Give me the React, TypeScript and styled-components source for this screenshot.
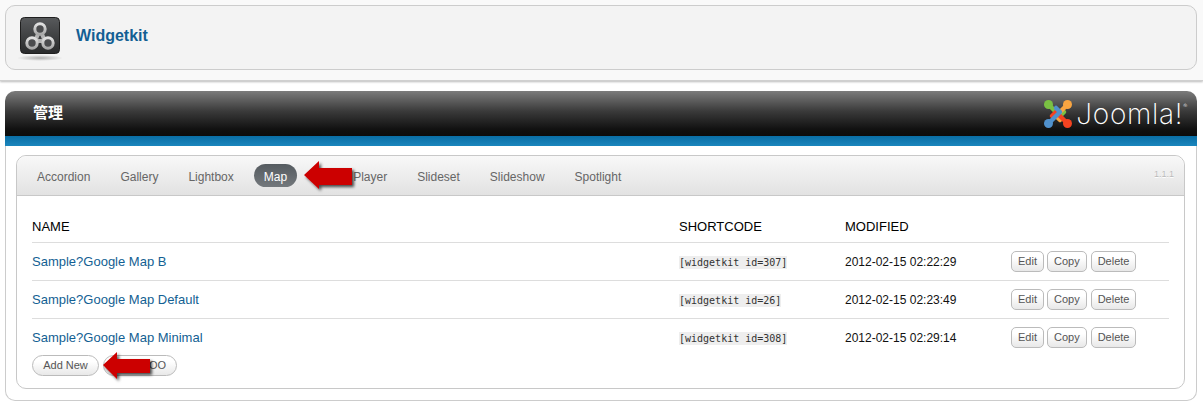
import styled, { createGlobalStyle } from 'styled-components';

const GlobalStyle = createGlobalStyle`
  html, body {
    margin: 0;
    padding: 0;
    background: #fff;
    font-family: "Liberation Sans", Arial, sans-serif;
  }
`;

interface MapRow {
  name: string;
  shortcode: string;
  modified: string;
}

const rows: MapRow[] = [
  { name: 'Sample?Google Map B', shortcode: '[widgetkit id=307]', modified: '2012-02-15 02:22:29' },
  { name: 'Sample?Google Map Default', shortcode: '[widgetkit id=26]', modified: '2012-02-15 02:23:49' },
  { name: 'Sample?Google Map Minimal', shortcode: '[widgetkit id=308]', modified: '2012-02-15 02:29:14' },
];

const tabs = ['Accordion', 'Gallery', 'Lightbox', 'Map', 'Media Player', 'Slideset', 'Slideshow', 'Spotlight'];

const RedArrow = ({ path }: { path: string }) => (
  <svg width="58" height="38" viewBox="0 0 58 38">
    <defs>
      <filter id="arrow-shadow" x="-20%" y="-20%" width="150%" height="150%">
        <feDropShadow dx="2" dy="2" stdDeviation="1.6" floodColor="#000" floodOpacity="0.7" />
      </filter>
    </defs>
    <path d={path} fill="#cc0000" filter="url(#arrow-shadow)" />
  </svg>
);

const WidgetkitIcon = () => (
  <svg width="40" height="37" viewBox="0 0 40 37">
    <defs>
      <linearGradient id="wk-bg" x1="0" y1="0" x2="0" y2="1">
        <stop offset="0" stopColor="#585a5c" />
        <stop offset="1" stopColor="#292a2b" />
      </linearGradient>
      <linearGradient id="wk-ring" x1="0" y1="0" x2="0" y2="1">
        <stop offset="0" stopColor="#e2e2e2" />
        <stop offset="1" stopColor="#a8a8a8" />
      </linearGradient>
    </defs>
    <rect x="0.5" y="0.5" width="39" height="36" rx="4" fill="url(#wk-bg)" stroke="#1f1f1f" />
    <path d="M20 12 L16 22 M20 12 L24 22 M16 24 H24" stroke="#b4b4b4" strokeWidth="4" />
    <circle cx="20" cy="12" r="5.2" fill="#4b4c4e" stroke="url(#wk-ring)" strokeWidth="3" />
    <circle cx="12" cy="26" r="5.2" fill="#4b4c4e" stroke="url(#wk-ring)" strokeWidth="3" />
    <circle cx="28" cy="26" r="5.2" fill="#4b4c4e" stroke="url(#wk-ring)" strokeWidth="3" />
  </svg>
);

const JoomlaMark = () => (
  <svg width="30" height="30" viewBox="0 0 30 30" fill="none" strokeLinecap="round" strokeLinejoin="round">
    <path d="M6 6 L17 17 L21 13" stroke="#7ac143" strokeWidth="4.5" />
    <path d="M24 6 L13 17 L17 21" stroke="#f9a541" strokeWidth="4.5" />
    <path d="M24 24 L13 13 L9 17" stroke="#f44321" strokeWidth="4.5" />
    <path d="M6 24 L17 13 L13 9" stroke="#5091cd" strokeWidth="4.5" />
    <circle cx="5.5" cy="5.5" r="4.5" fill="#7ac143" />
    <circle cx="24.5" cy="5.5" r="4.5" fill="#f9a541" />
    <circle cx="5.5" cy="24.5" r="4.5" fill="#5091cd" />
    <circle cx="24.5" cy="24.5" r="4.5" fill="#f44321" />
  </svg>
);

export default function App() {
  return (
    <>
      <GlobalStyle />
      <Top>
        <TitleBox>
          <IconWrap>
            <WidgetkitIcon />
            <IconReflection />
          </IconWrap>
          <Title>Widgetkit</Title>
        </TitleBox>
      </Top>
      <Page>
        <DarkHeader>
          <HeaderTitle>管理</HeaderTitle>
          <Joomla>
            <JoomlaMark />
            <JoomlaWord>
              Joomla!<sup>®</sup>
            </JoomlaWord>
          </Joomla>
        </DarkHeader>
        <BlueBar />
        <Body>
          <Panel>
            <TabBar>
              {tabs.map((tab) => (
                <Tab key={tab} $active={tab === 'Map'}>
                  {tab}
                  {tab === 'Map' && (
                    <ArrowSpot $left={49} $top={-4}>
                      <RedArrow path="M1 15 L16 1 V8 H49 V25 H16 V29 Z" />
                    </ArrowSpot>
                  )}
                </Tab>
              ))}
              <Version>1.1.1</Version>
            </TabBar>
            <Content>
              <HeadRow>
                <span>NAME</span>
                <span>SHORTCODE</span>
                <span>MODIFIED</span>
              </HeadRow>
              {rows.map((row) => (
                <Row key={row.name}>
                  <NameLink href="#">{row.name}</NameLink>
                  <span>
                    <Code>{row.shortcode}</Code>
                  </span>
                  <span>{row.modified}</span>
                  <Actions>
                    <SmallButton>Edit</SmallButton>
                    <SmallButton>Copy</SmallButton>
                    <SmallButton>Delete</SmallButton>
                  </Actions>
                </Row>
              ))}
              <Footer>
                <PillButton>
                  Add New
                  <ArrowSpot $left={69} $top={-5}>
                    <RedArrow path="M1 14 L15 1 V8 H48 V22 H15 V28 Z" />
                  </ArrowSpot>
                </PillButton>
                <PillButton $wide>DEMOO</PillButton>
              </Footer>
            </Content>
          </Panel>
        </Body>
      </Page>
    </>
  );
}

const Top = styled.div`
  background: #f9f9f9;
  padding: 5px 6px 10px 5px;
  border-bottom: 1px solid #d0d0d0;
  box-shadow: 0 1px 2px #bbb;
`;

const TitleBox = styled.div`
  height: 65px;
  box-sizing: border-box;
  border: 1px solid #ccc;
  border-radius: 10px;
  background: #f3f3f3;
  display: flex;
  align-items: center;
  padding-left: 14px;
`;

const IconWrap = styled.div`
  position: relative;
  width: 40px;
  height: 37px;
  margin-bottom: 5px;
  line-height: 0;
`;

const IconReflection = styled.div`
  position: absolute;
  left: -3px;
  right: -3px;
  bottom: -7px;
  height: 6px;
  border-radius: 50%;
  background: radial-gradient(closest-side, #b0b0b0, rgba(176, 176, 176, 0));
`;

const Title = styled.div`
  margin: 0 0 3px 16px;
  color: #135f93;
  font-size: 16px;
  font-weight: bold;
`;

const Page = styled.div`
  margin: 10px 6px 0 5px;
`;

const DarkHeader = styled.div`
  height: 45px;
  border-radius: 10px 10px 0 0;
  background: linear-gradient(#7c7c7c 0%, #3a3a3a 45%, #111 85%, #0c0c0c 100%);
  display: flex;
  align-items: center;
  justify-content: space-between;
  padding: 0 9px 0 28px;
`;

const HeaderTitle = styled.div`
  color: #fff;
  font-family: "Noto Sans CJK JP", sans-serif;
  font-size: 15px;
  font-weight: bold;
  margin-bottom: 4px;
`;

const Joomla = styled.div`
  display: flex;
  align-items: center;
  gap: 3px;
  height: 32px;
`;

const JoomlaWord = styled.div`
  color: #fff;
  font-family: Inter, sans-serif;
  font-weight: 200;
  font-size: 28px;
  letter-spacing: 0.7px;
  sup {
    font-size: 6px;
    vertical-align: 16px;
    line-height: 0;
  }
`;

const BlueBar = styled.div`
  height: 10px;
  background: linear-gradient(#0a6ea5, #1b86bd);
`;

const Body = styled.div`
  background: #fff;
  border: 1px solid #ccc;
  border-top: 0;
  border-radius: 0 0 10px 10px;
  padding: 9px 11px 11px 10px;
`;

const Panel = styled.div`
  border: 1px solid #c8c8c8;
  border-radius: 10px;
  background: #fff;
`;

const TabBar = styled.div`
  height: 40px;
  box-sizing: border-box;
  padding: 8px 10px 0 10px;
  display: flex;
  gap: 10px;
  align-items: flex-start;
  border-bottom: 1px solid #c8c8c8;
  border-radius: 10px 10px 0 0;
  background: linear-gradient(#f8f8f8, #e2e2e2);
`;

const Tab = styled.div<{ $active?: boolean }>`
  position: relative;
  height: 23px;
  line-height: 27px;
  padding: 0 10px;
  border-radius: 12px;
  font-size: 12px;
  color: ${(props) => (props.$active ? '#fff' : '#666')};
  background: ${(props) => (props.$active ? 'linear-gradient(#555b60, #73787c)' : 'none')};
`;

const Version = styled.div`
  margin-left: auto;
  margin-top: 5px;
  font-size: 9px;
  color: #bbb;
  text-shadow: 0 1px 0 #fff;
`;

const ArrowSpot = styled.div<{ $left: number; $top: number }>`
  position: absolute;
  z-index: 2;
  left: ${(props) => props.$left}px;
  top: ${(props) => props.$top}px;
  line-height: 0;
`;

const Content = styled.div`
  padding: 16px 15px 12px 15px;
`;

const gridColumns = '647px 166px 166px 1fr';

const HeadRow = styled.div`
  display: grid;
  grid-template-columns: ${gridColumns};
  height: 30px;
  line-height: 30px;
  font-size: 13px;
  color: #000;
  border-bottom: 1px solid #ddd;
`;

const Row = styled.div`
  display: grid;
  grid-template-columns: ${gridColumns};
  height: 37px;
  align-items: center;
  font-size: 12px;
  color: #111;
  & + & {
    border-top: 1px solid #ddd;
  }
`;

const NameLink = styled.a`
  color: #135f93;
  font-size: 13px;
  text-decoration: none;
`;

const Code = styled.code`
  font-family: "DejaVu Sans Mono", monospace;
  font-size: 10px;
  background: #eee;
  color: #333;
  padding: 1px 0;
`;

const Actions = styled.div`
  display: flex;
  gap: 3px;
`;

const SmallButton = styled.button`
  height: 21px;
  padding: 0 6px 2px;
  font-family: inherit;
  font-size: 11px;
  color: #555;
  border: 1px solid #bbb;
  border-radius: 5px;
  background: linear-gradient(#fff 30%, #e8e8e8);
  &:nth-child(3) {
    margin-left: 1px;
  }
`;

const Footer = styled.div`
  display: flex;
  gap: 4px;
  margin-top: -1px;
`;

const PillButton = styled.button<{ $wide?: boolean }>`
  position: relative;
  height: 21px;
  width: ${(props) => (props.$wide ? '74px' : '67px')};
  padding: ${(props) => (props.$wide ? '0 10px 2px 0' : '0 0 2px')};
  text-align: ${(props) => (props.$wide ? 'right' : 'center')};
  font-family: inherit;
  font-size: 11px;
  color: #555;
  border: 1px solid #bbb;
  border-radius: 11px;
  background: linear-gradient(#fff 30%, #e8e8e8);
`;
